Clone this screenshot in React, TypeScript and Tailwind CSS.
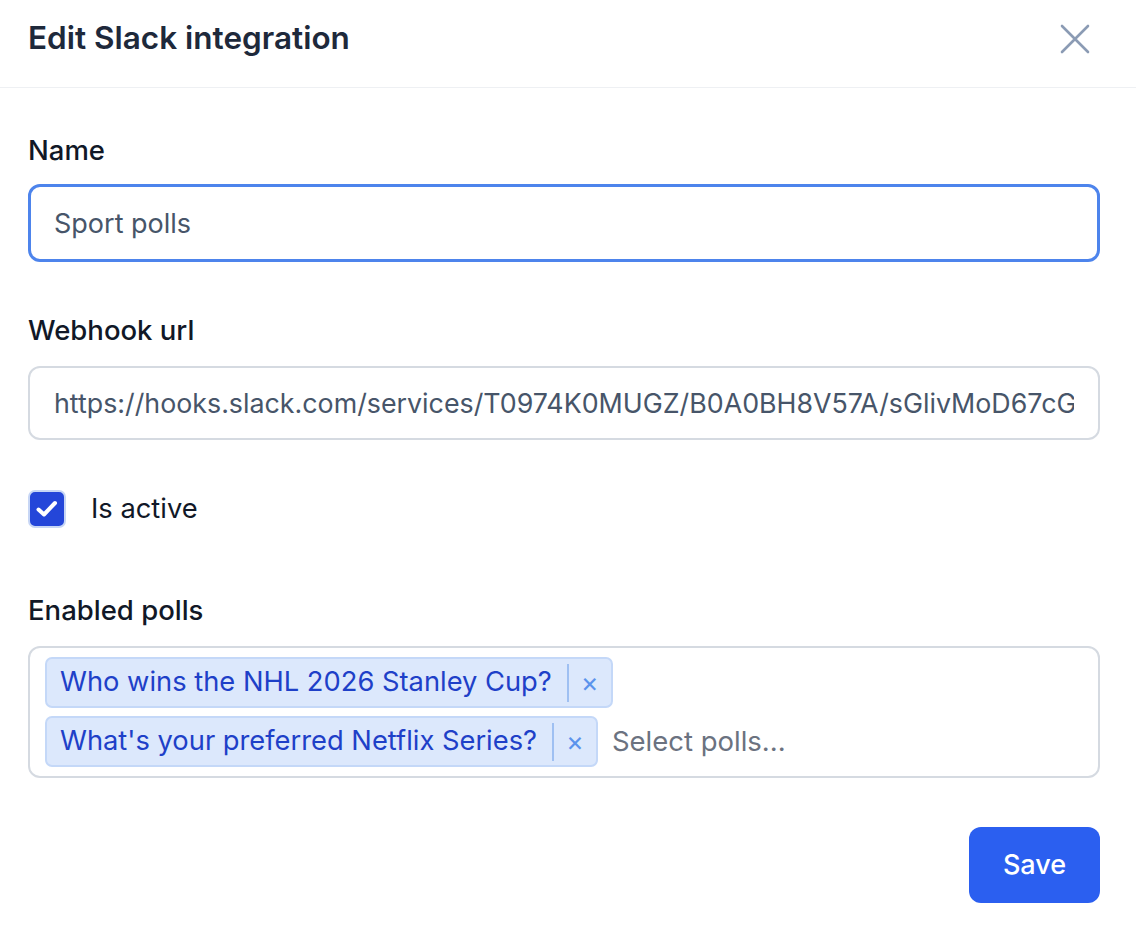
import React, { useState } from "react";

const polls = [
  "Who wins the NHL 2026 Stanley Cup?",
  "What's your preferred Netflix Series?",
];

function CloseIcon() {
  return (
    <svg width="30" height="30" viewBox="0 0 30 30" fill="none">
      <path
        d="M2 2L28 28M28 2L2 28"
        stroke="#8b9bb4"
        strokeWidth="2.6"
        strokeLinecap="round"
      />
    </svg>
  );
}

export default function App() {
  const [name, setName] = useState("Sport polls");
  const [url, setUrl] = useState(
    "https://hooks.slack.com/services/T0974K0MUGZ/B0A0BH8V57A/sGlivMoD67cGq1"
  );
  const [active, setActive] = useState(true);
  const [selected, setSelected] = useState(polls);

  return (
    <div className="w-[1136px] h-[934px] bg-white font-['Inter',sans-serif] text-[#111827]">
      {/* header */}
      <div className="h-[88px] border-b border-[#eef0f3] flex items-start justify-between pl-[28px] pr-[46px] pt-[18px]">
        <h2 className="text-[31.5px] leading-[40px] font-semibold text-[#1e293b]">
          Edit Slack integration
        </h2>
        <button className="mt-[6px]">
          <CloseIcon />
        </button>
      </div>

      <form className="flex flex-col pl-[28px] pr-[36px] pt-[44px]" onSubmit={(e) => e.preventDefault()}>
        <label htmlFor="name" className="text-[27.5px] leading-[36px] font-medium mb-[16px]">
          Name
        </label>
        <input
          id="name"
          type="text"
          value={name}
          onChange={(e) => setName(e.target.value)}
          className="h-[78px] border-[3px] border-[#4d84ec] rounded-[12px] px-[23px] text-[27px] text-[#475569] outline-none"
        />

        <label htmlFor="webhook" className="text-[27.5px] leading-[36px] font-medium mt-[50px] mb-[18px]">
          Webhook url
        </label>
        <input
          id="webhook"
          type="text"
          value={url}
          onChange={(e) => setUrl(e.target.value)}
          className="h-[74px] border-2 border-[#d5dae1] rounded-[12px] px-[24px] text-[26.8px] text-[#475569] outline-none"
        />

        <div className="flex items-center mt-[50px] h-[38px]">
          <button
            type="button"
            onClick={() => setActive(!active)}
            className="w-[38px] h-[38px] rounded-[7px] border-2 border-[#c7d6f5] bg-[#2446d9] flex items-center justify-center"
          >
            {active && (
              <svg width="26" height="26" viewBox="0 0 26 26" fill="none">
                <path
                  d="M4.5 13.5L10 18.5L21 7"
                  stroke="white"
                  strokeWidth="4"
                  strokeLinecap="round"
                  strokeLinejoin="round"
                />
              </svg>
            )}
          </button>
          <span className="ml-[25px] text-[27.3px] leading-[36px]">Is active</span>
        </div>

        <label className="text-[27.5px] leading-[36px] font-medium mt-[64px] mb-[18px]">
          Enabled polls
        </label>
        <div className="h-[132px] border-2 border-[#d5dae1] rounded-[12px] pl-[15px] pt-[9px] flex flex-wrap content-start gap-y-[8px] w-full">
          {selected.map((p, i) => (
            <div key={p} className="flex w-full">
              <div className="h-[51px] flex items-center bg-[#dce8fc] border-2 border-[#c4d8f8] rounded-[7px] text-[#1e40c8] text-[27.3px]">
                <span className="pl-[13px] pr-[15px]">{p}</span>
                <span className="w-[2px] h-[38px] bg-[#9fc0f2]" />
                <button
                  type="button"
                  onClick={() => setSelected(selected.filter((s) => s !== p))}
                  className="px-[12px] text-[27px] leading-none text-[#5b93ec]"
                >
                  ×
                </button>
              </div>
              {i === selected.length - 1 && (
                <span className="ml-[14px] self-center text-[27.5px] text-[#6b7280]">
                  Select polls...
                </span>
              )}
            </div>
          ))}
        </div>

        <div className="flex justify-end mt-[49px]">
          <button
            type="submit"
            className="w-[131px] h-[76px] rounded-[12px] bg-[#2b5ff0] text-white text-[27px] font-medium"
          >
            Save
          </button>
        </div>
      </form>
    </div>
  );
}
